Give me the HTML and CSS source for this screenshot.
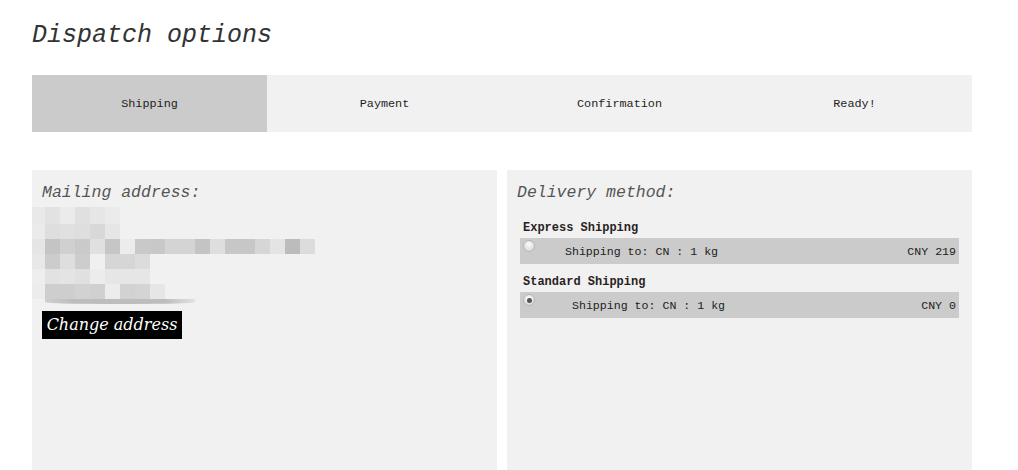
FILE: index.html
```html
<!DOCTYPE html>
<html>
<head>
<meta charset="utf-8">
<title>Dispatch options</title>
<link rel="stylesheet" href="styles.css">
</head>
<body>
<div class="page">
  <h1 class="title">Dispatch options</h1>
  <div class="steps">
    <div class="step active">Shipping</div>
    <div class="step">Payment</div>
    <div class="step">Confirmation</div>
    <div class="step">Ready!</div>
  </div>
  <div class="panels">
    <section class="panel">
      <h2 class="panel-title">Mailing address:</h2>
      <div class="mosaic">
        <div class="mrow r1"><i class="c e9"></i><i class="c e2"></i><i class="c eb"></i><i class="c e0"></i><i class="c e6"></i><i class="c eb"></i></div>
        <div class="mrow"><i class="c eb"></i><i class="c de"></i><i class="c e0"></i><i class="c de"></i><i class="c d8"></i><i class="c e6"></i></div>
        <div class="mrow"><i class="c e5"></i><i class="c c4"></i><i class="c d0"></i><i class="c ca"></i><i class="c e0"></i><i class="c c6"></i><i class="c ec"></i><i class="c c9"></i><i class="c c8"></i><i class="c d4"></i><i class="c d4"></i><i class="c c4"></i><i class="c de"></i><i class="c c7"></i><i class="c c7"></i><i class="c d6"></i><i class="c e4"></i><i class="c bb"></i><i class="c dc"></i></div>
        <div class="mrow"><i class="c e8"></i><i class="c cc"></i><i class="c de"></i><i class="c cd"></i><i class="c f0"></i><i class="c d6"></i><i class="c d6"></i><i class="c dc"></i></div>
        <div class="mrow"><i class="c ee"></i><i class="c e2"></i><i class="c e4"></i><i class="c e0"></i><i class="c ec"></i><i class="c e6"></i><i class="c e6"></i><i class="c e6"></i></div>
        <div class="mrow"><i class="c ec"></i><i class="c ce"></i><i class="c ce"></i><i class="c d2"></i><i class="c d0"></i><i class="c ec"></i><i class="c d2"></i><i class="c d4"></i><i class="c e6"></i></div>
        <div class="mshadow"></div>
      </div>
      <button class="change-btn" type="button">Change address</button>
    </section>
    <section class="panel">
      <h2 class="panel-title">Delivery method:</h2>
      <div class="methods">
        <div class="method">
          <div class="method-name">Express Shipping</div>
          <table class="option">
            <tr>
              <td class="opt-radio"><span class="radio"></span></td>
              <td class="opt-desc">Shipping to: CN : 1 kg</td>
              <td class="opt-price">CNY 219</td>
            </tr>
          </table>
        </div>
        <div class="method">
          <div class="method-name">Standard Shipping</div>
          <table class="option">
            <tr>
              <td class="opt-radio wide"><span class="radio checked"></span></td>
              <td class="opt-desc">Shipping to: CN : 1 kg</td>
              <td class="opt-price">CNY 0</td>
            </tr>
          </table>
        </div>
      </div>
    </section>
  </div>
</div>
</body>
</html>
```

FILE: styles.css
```css
html, body {
  margin: 0;
  padding: 0;
  background: #ffffff;
  overflow: hidden;
}

.page {
  width: 940px;
  padding: 0 32px;
  font-family: "Liberation Mono", "DejaVu Sans Mono", monospace;
  color: #222;
}

.title {
  margin: 0;
  padding-top: 20px;
  height: 75px;
  box-sizing: border-box;
  font-size: 25px;
  line-height: 32px;
  font-weight: normal;
  font-style: italic;
  color: #333;
}

.steps {
  display: grid;
  grid-template-columns: repeat(4, 1fr);
  height: 57px;
  background: #f1f1f1;
}

.step {
  display: flex;
  align-items: center;
  justify-content: center;
  font-size: 11.8px;
  color: #1e1e1e;
}

.step.active {
  background: #cbcbcb;
}

.panels {
  margin-top: 38px;
  display: grid;
  grid-template-columns: 1fr 1fr;
  gap: 10px;
}

.panel {
  background: #f1f1f1;
  height: 300px;
  box-sizing: border-box;
  padding: 13px 13px 0 10px;
}

.panel-title {
  margin: 0;
  font-size: 16.5px;
  line-height: 20px;
  font-weight: normal;
  font-style: italic;
  color: #555;
}

.mosaic {
  margin: 4px 0 0 -10px;
  display: flex;
  flex-direction: column;
}

.mrow {
  display: flex;
  height: 15px;
}

.mrow.r1 {
  height: 17px;
}

.c {
  display: block;
  width: 15px;
  height: 100%;
}

.c:first-child {
  width: 13px;
}

.bb { background: #bcbcbc; }
.c4 { background: #c4c4c4; }
.c6 { background: #c6c6c6; }
.c7 { background: #c7c7c7; }
.c8 { background: #c8c8c8; }
.c9 { background: #c9c9c9; }
.ca { background: #cacaca; }
.cc { background: #cccccc; }
.cd { background: #cdcdcd; }
.ce { background: #cecece; }
.d0 { background: #d0d0d0; }
.d2 { background: #d2d2d2; }
.d4 { background: #d4d4d4; }
.d6 { background: #d6d6d6; }
.d8 { background: #d8d8d8; }
.dc { background: #dcdcdc; }
.de { background: #dedede; }
.e0 { background: #e0e0e0; }
.e2 { background: #e2e2e2; }
.e4 { background: #e4e4e4; }
.e5 { background: #e5e5e5; }
.e6 { background: #e6e6e6; }
.e8 { background: #e8e8e8; }
.e9 { background: #e9e9e9; }
.eb { background: #ebebeb; }
.ec { background: #ececec; }
.ee { background: #eeeeee; }
.f0 { background: #f0f0f0; }

.mshadow {
  margin-left: 13px;
  width: 150px;
  height: 5px;
  background: linear-gradient(to right, #cfcfcf, #bdbdbd 20%, #bdbdbd 80%, #e2e2e2);
  border-radius: 0 0 40% 40%;
}

.change-btn {
  margin-top: 7px;
  display: block;
  width: 140px;
  height: 28px;
  padding: 0;
  border: 0;
  background: #000;
  color: #fff;
  font-family: "DejaVu Serif", "Liberation Serif", serif;
  font-style: italic;
  font-size: 16px;
  line-height: 28px;
  text-align: center;
}

.methods {
  padding-left: 3px;
  margin-top: 8px;
}

.method {
  padding-top: 9px;
}

.method + .method {
  padding-top: 10px;
}

.method-name {
  font-size: 12px;
  line-height: 16px;
  font-weight: bold;
  color: #2a1f1f;
  padding: 0 0 2px 3px;
  font-family: "Liberation Mono", "DejaVu Sans Mono", monospace;
}

.option {
  width: 100%;
  height: 26px;
  border-collapse: collapse;
  background: #cbcbcb;
  font-size: 11.6px;
  color: #222;
}

.option td {
  padding: 0;
}

.opt-radio {
  vertical-align: top;
  width: 45px;
}

.opt-radio.wide {
  width: 52px;
}

.opt-desc {
  vertical-align: middle;
  text-align: left;
}

.opt-price {
  vertical-align: middle;
  text-align: right;
  padding-right: 3px !important;
}

.radio {
  display: block;
  margin: 2px 0 0 3px;
  width: 10px;
  height: 10px;
  border-radius: 50%;
  border: 1px solid #b4b4b4;
  background: radial-gradient(circle at 50% 35%, #fafafa, #dcdcdc 75%);
  position: relative;
}

.radio.checked::after {
  content: "";
  position: absolute;
  left: 2.5px;
  top: 2.5px;
  width: 5px;
  height: 5px;
  border-radius: 50%;
  background: #555;
}
```
